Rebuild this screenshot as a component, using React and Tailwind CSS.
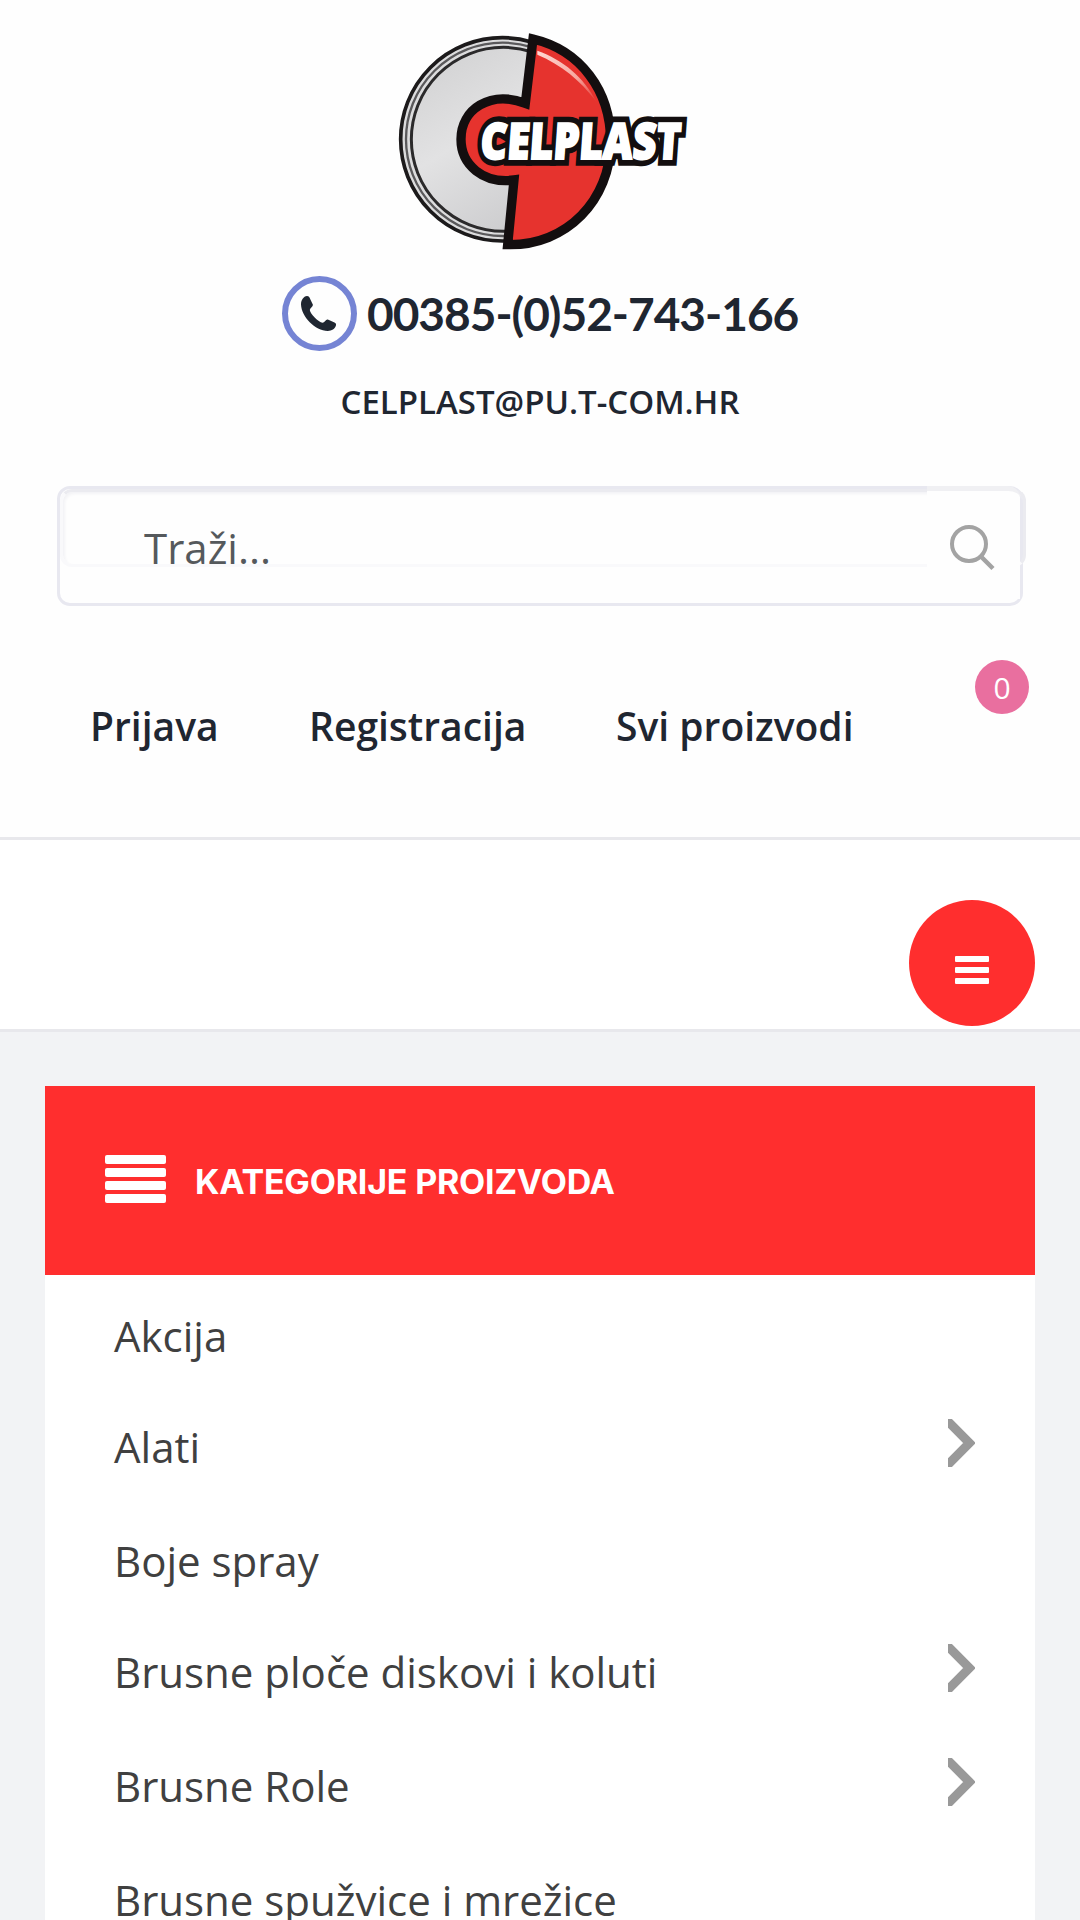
import React from "react";

const categories = [
  { name: "Akcija", height: "h-[111px]" },
  { name: "Alati", height: "h-[114px]", sub: true },
  { name: "Boje spray", height: "h-[111px]" },
  { name: "Brusne ploče diskovi i koluti", height: "h-[114px]", sub: true },
  { name: "Brusne Role", height: "h-[114px]", sub: true },
  { name: "Brusne spužvice i mrežice", height: "h-[114px]" },
];

function Logo() {
  return (
    <svg viewBox="0 0 960 720" className="h-[240px] w-[320px] overflow-visible">
      <defs>
        <linearGradient id="disc" x1="0" y1="0" x2="0.6" y2="1">
          <stop offset="0" stopColor="#cfcfd0" />
          <stop offset="0.5" stopColor="#e2e2e3" />
          <stop offset="1" stopColor="#cbcbcd" />
        </linearGradient>
        <linearGradient id="shine" x1="0" y1="0" x2="1" y2="1">
          <stop offset="0" stopColor="#ffd9d4" />
          <stop offset="0.6" stopColor="#f7a79f" />
          <stop offset="1" stopColor="#e6332e" />
        </linearGradient>
        <clipPath id="leftHalf">
          <path d="M0 0H456L378 720H0Z" />
        </clipPath>
      </defs>
      {/* grey half of the disc */}
      <g clipPath="url(#leftHalf)">
        <circle cx="367" cy="358" r="305" fill="#dcdcdd" stroke="#1c1a1b" strokeWidth="11" />
        <circle cx="368" cy="358" r="290" fill="none" stroke="#5a595b" strokeWidth="7" />
        <circle cx="370" cy="358" r="276" fill="url(#disc)" stroke="#2b2a2b" strokeWidth="9" />
      </g>
      {/* red half */}
      <path
        d="M459 57C600 90 692 210 692 365C692 540 560 678 383 674L402 480C310 492 243 435 243 358C243 268 330 210 436 250Z"
        fill="#e6332e"
        stroke="#130e0f"
        strokeWidth="28"
      />
      <path d="M472 92C550 120 610 170 650 246C600 180 545 135 472 104Z" fill="url(#shine)" />
      <g
        transform="translate(16 0) skewX(-4)"
        className="font-['Open_Sans',sans-serif] text-[150px] font-extrabold"
      >
        <text
          x="312"
          y="418"
          textLength="600"
          lengthAdjust="spacingAndGlyphs"
          fill="#fff"
          stroke="#130e0f"
          strokeWidth="40"
          paintOrder="stroke"
        >
          CELPLAST
        </text>
        <text
          x="312"
          y="418"
          textLength="600"
          lengthAdjust="spacingAndGlyphs"
          fill="#fff"
          stroke="#fff"
          strokeWidth="6"
          aria-hidden="true"
        >
          CELPLAST
        </text>
      </g>
    </svg>
  );
}

function PhoneIcon() {
  return (
    <svg viewBox="0 0 35 35" className="mr-[3px] h-[35px] w-[35px]" fill="#1f2631">
      <path d="M0 8.500C0 4 2.500 0.300 6 0C7.800 0 8.400 1 9.300 3.200L11.800 8.500C12.600 10.300 8.800 12 8.800 14C9 17.500 17.500 26.200 21.500 26.700C23.500 26.800 24.800 22.900 26.800 23.500L33.500 26.400C35 27.100 35.300 28 34.900 29.600C34 33 30.800 35 26.800 35C14 34.500 0.500 21 0 8.500Z" />
    </svg>
  );
}

function Chevron() {
  return (
    <svg viewBox="0 0 27 48" className="mt-[33px] h-[48px] w-[27px]">
      <path d="M1 3.500L21.500 24L1 44.500" fill="none" stroke="#999" strokeWidth="9" strokeLinecap="round" />
    </svg>
  );
}

function Search() {
  return (
    <form className="relative ml-[57px] mt-[59px] h-[120px] w-[966px] rounded-[13px] border-[3px] border-[#e8e8f0]">
      <div className="h-[78px] w-[966px] rounded-[12px] border-[3px] border-[#f9f9fb] border-t-[#ebebf0] border-r-[#ebebf0] pl-[81px] pt-[27px] shadow-[inset_2px_2px_3px_#f3f3f6]">
        <span className="block whitespace-nowrap text-[42px] leading-[57px] text-[#55595c]">Traži...</span>
      </div>
      <button
        type="button"
        className="absolute -top-[3px] right-0 grid h-[113px] w-[93px] place-items-center rounded-tr-[12px] border-t-[5px] border-[#f0f0f3] bg-[#fefefe]"
      >
        <svg viewBox="0 0 48 48" className="mr-[2px] mt-[4px] h-[48px] w-[48px]" fill="none" stroke="#a3a3a3">
          <circle cx="20" cy="21" r="17" strokeWidth="4" />
          <path d="M31.500 33L44 45.500" strokeWidth="4.500" />
        </svg>
      </button>
    </form>
  );
}

export default function App() {
  return (
    <div className="h-[1920px] w-[1080px] overflow-hidden bg-[#f2f3f5] font-['Open_Sans',sans-serif]">
      <header className="h-[840px] border-b-[3px] border-[#e8e8ec] bg-[#fefefe]">
        <div className="flex h-[260px] justify-center pt-[20px]">
          <Logo />
        </div>

        <div className="ml-[282px] mt-[16px] flex h-[75px] items-center">
          <div className="grid h-[75px] w-[75px] shrink-0 place-items-center rounded-full border-[6px] border-[#7584d4]">
            <PhoneIcon />
          </div>
          <span className="ml-[10px] whitespace-nowrap font-[Lato] text-[46px] font-bold tracking-[-1px] text-[#1f2631]">
            00385-(0)52-743-166
          </span>
        </div>

        <div className="mt-[25px] text-center text-[33px] font-semibold leading-[51px] text-[#1f2631]">
          CELPLAST@PU.T-COM.HR
        </div>

        <Search />

        <nav className="mt-[54px] flex h-[120px] text-[39px] font-semibold text-[#1f2631]">
          <a href="#" className="ml-[90px] mt-[37px] w-[219px]">Prijava</a>
          <a href="#" className="mt-[37px] w-[307px]">Registracija</a>
          <a href="#" className="mt-[37px] w-[359px] whitespace-nowrap">Svi proizvodi</a>
          <span className="grid h-[54px] w-[54px] shrink-0 place-items-center rounded-full bg-[#e96f9f] text-[30px] font-normal text-white">
            0
          </span>
        </nav>
      </header>

      <div className="flex h-[192px] justify-end border-b-[3px] border-[#e8e8ec] bg-white pr-[45px] pt-[60px]">
        <button className="flex h-[126px] w-[126px] flex-col items-center gap-[5px] rounded-full bg-[#ff2e2e] pt-[56px]">
          <span className="h-[6px] w-[34px] rounded-[1px] bg-white" />
          <span className="h-[6px] w-[34px] rounded-[1px] bg-white" />
          <span className="h-[6px] w-[34px] rounded-[1px] bg-white" />
        </button>
      </div>

      <section className="mx-[45px] mt-[54px] bg-white">
        <div className="flex h-[189px] items-center bg-[#ff2e2e] pl-[60px]">
          <div className="mb-[4px] flex w-[61px] flex-col gap-[4px]">
            <span className="h-[9px] rounded-[2px] bg-white" />
            <span className="h-[9px] rounded-[2px] bg-white" />
            <span className="h-[9px] rounded-[2px] bg-white" />
            <span className="h-[9px] rounded-[2px] bg-white" />
          </div>
          <h2 className="ml-[29px] mt-[2px] whitespace-nowrap font-[Inter] text-[34px] font-bold tracking-[-0.2px] text-white">
            KATEGORIJE PROIZVODA
          </h2>
        </div>
        <ul>
          {categories.map((item) => (
            <li key={item.name} className={`flex justify-between pl-[69px] pr-[60px] ${item.height}`}>
              <a href="#" className="mt-[32px] text-[42px] leading-[57px] text-[#404040]">
                {item.name}
              </a>
              {item.sub && <Chevron />}
            </li>
          ))}
        </ul>
      </section>
    </div>
  );
}
